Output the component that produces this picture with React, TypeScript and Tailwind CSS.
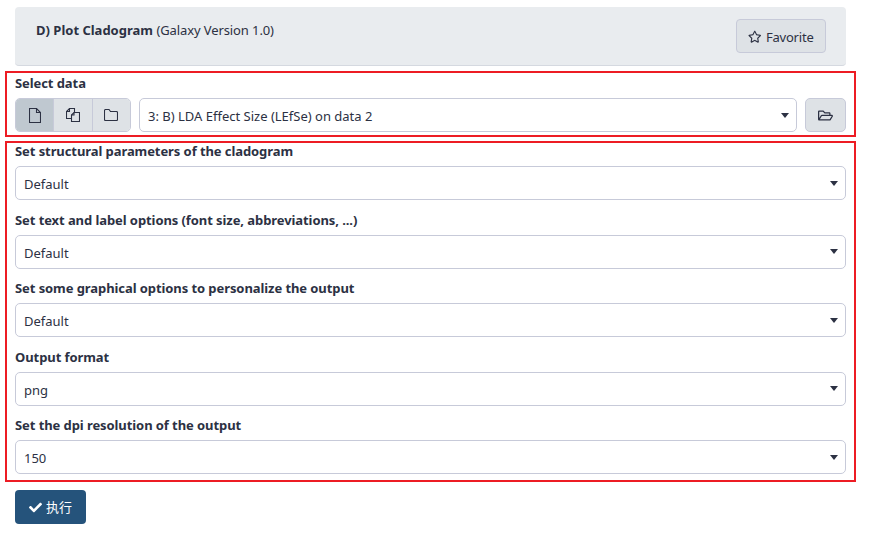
import { FaCheck, FaRegFolderOpen, FaRegStar } from 'react-icons/fa';

const fields = [
    { label: 'Set structural parameters of the cladogram', value: 'Default' },
    { label: 'Set text and label options (font size, abbreviations, ...)', value: 'Default' },
    { label: 'Set some graphical options to personalize the output', value: 'Default' },
    { label: 'Output format', value: 'png' },
    { label: 'Set the dpi resolution of the output', value: '150' },
];

function Caret() {
    return <span className="w-0 h-0 border-x-[4px] border-x-transparent border-t-[5px] border-t-[#2c3143]" />;
}

function FileIcon() {
    return (
        <svg width="12" height="15" viewBox="0 0 12 15" fill="none" stroke="currentColor" strokeWidth="1.1">
            <path d="M.5.5H7.500L11.500 4.500V14.500H.5Z" />
            <path d="M7.500.5V4.500H11.500" />
        </svg>
    );
}

function CopyIcon() {
    return (
        <svg width="14" height="14" viewBox="0 0 14 14" fill="none" stroke="currentColor" strokeWidth="1.1">
            <path d="M6 10.500H.5V3.500L3.500.5H8.500V4.500" />
            <path d="M3.500.5V3.500H.5" />
            <path d="M8 4.500H13.500V13.500H5.500V7Z" />
            <path d="M8 4.500V7H5.500" />
        </svg>
    );
}

function FolderIcon() {
    return (
        <svg width="14" height="12" viewBox="0 0 14 12" fill="none" stroke="currentColor" strokeWidth="1.1">
            <path d="M1.500.5H5L6.500 2.500H12.500A1 1 0 0 1 13.500 3.500V10.500A1 1 0 0 1 12.500 11.500H1.500A1 1 0 0 1 .5 10.500V1.500A1 1 0 0 1 1.500.5Z" />
        </svg>
    );
}

function SelectBox({ value, className }: { value: string; className: string }) {
    return (
        <div className={`flex items-center justify-between h-[34.25px] pl-[8px] pr-[7px] bg-white border border-[#c7cad9] rounded-[5px] ${className}`}>
            <span className="pt-[2px]">{value}</span>
            <Caret />
        </div>
    );
}

export default function App() {
    return (
        <div className="w-[869px] h-[540px] bg-white overflow-hidden pt-[7px] pl-[15px] pr-[23px] text-[13px] leading-[20px] text-[#2c3143] font-['Noto_Sans','Noto_Sans_CJK_SC',sans-serif]">
            <div className="flex justify-between h-[59px] bg-[#e9ecef] border-b border-[#d5d9e0] rounded-[4px] pl-[21px] pr-[20px] pt-[13px]">
                <div>
                    <b className="font-bold">D) Plot Cladogram</b> <span className="tracking-[-0.1px]">(Galaxy Version 1.0)</span>
                </div>
                <button className="flex items-center gap-[4px] h-[34px] w-[90px] mt-[-1px] pt-[2px] justify-center bg-[#dee2e6] border border-[#c7cad9] rounded-[4px] tracking-[-0.2px]">
                    <FaRegStar className="text-[13.5px]" />
                    Favorite
                </button>
            </div>

            <div className="-mx-[10px] mt-[5px] h-[66px] border-2 border-[#ed1c24] px-[8px] pt-[2px]">
                <div className="font-bold leading-[16px] h-[23px] tracking-[-0.08px]">Select data</div>
                <div className="flex gap-[8px]">
                    <div className="flex w-[116px] h-[34px] shrink-0 border border-[#c7cad9] rounded-[5px] overflow-hidden">
                        <span className="flex-1 flex items-center justify-center bg-[#bfc8d0]"><FileIcon /></span>
                        <span className="flex-1 flex items-center justify-center bg-[#dee2e6] border-l border-[#c7cad9]"><CopyIcon /></span>
                        <span className="flex-1 flex items-center justify-center bg-[#dee2e6] border-l border-[#c7cad9]"><FolderIcon /></span>
                    </div>
                    <SelectBox value="3: B) LDA Effect Size (LEfSe) on data 2" className="flex-1" />
                    <span className="flex items-center justify-center w-[41px] h-[34px] shrink-0 bg-[#dee2e6] border border-[#c7cad9] rounded-[5px]">
                        <FaRegFolderOpen className="text-[15px]" />
                    </span>
                </div>
            </div>

            <div className="-mx-[10px] mt-[4px] h-[341px] border-2 border-[#ed1c24] px-[8px] flex flex-col gap-[11.25px]">
                {fields.map((f) => (
                    <div key={f.label}>
                        <div className="font-bold leading-[16px] mb-[7px] tracking-[-0.08px]">{f.label}</div>
                        <SelectBox value={f.value} className="" />
                    </div>
                ))}
            </div>

            <button className="flex items-center justify-center gap-[4px] mt-[8px] w-[71px] h-[34px] bg-[#25537b] text-white rounded-[4px]">
                <FaCheck className="text-[13px]" />
                执行
            </button>
        </div>
    );
}
